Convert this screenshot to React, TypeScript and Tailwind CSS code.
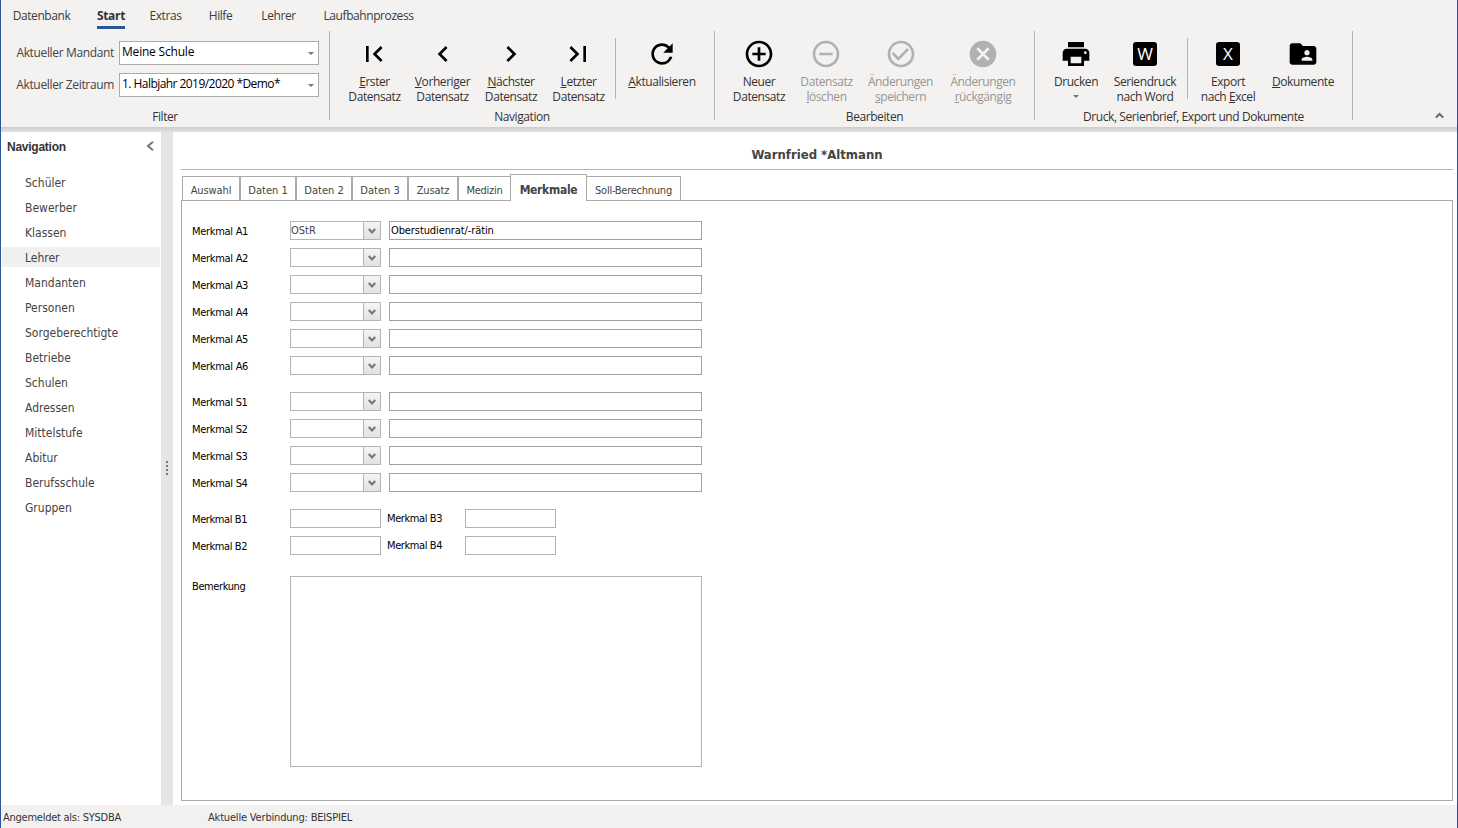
import { useState } from 'react';
import type { ReactNode } from 'react';
import type { IconType } from 'react-icons';
import {
  MdAddCircleOutline,
  MdCancel,
  MdCheckCircleOutline,
  MdChevronLeft,
  MdChevronRight,
  MdFirstPage,
  MdFolderShared,
  MdLastPage,
  MdPrint,
  MdRefresh,
  MdRemoveCircleOutline
} from 'react-icons/md';

const menuTabs = [
  { label: 'Datenbank', className: 'w-[57px] mr-[27px]' },
  { label: 'Start', className: 'w-[28px] mr-[25px]' },
  { label: 'Extras', className: 'w-[31px] mr-[27px]' },
  { label: 'Hilfe', className: 'w-[25px] mr-[29px]' },
  { label: 'Lehrer', className: 'w-[33px] mr-[29px]' },
  { label: 'Laufbahnprozess', className: 'w-[89px]' }
];

const navItems = [
  'Schüler',
  'Bewerber',
  'Klassen',
  'Lehrer',
  'Mandanten',
  'Personen',
  'Sorgeberechtigte',
  'Betriebe',
  'Schulen',
  'Adressen',
  'Mittelstufe',
  'Abitur',
  'Berufsschule',
  'Gruppen'
];

const formTabs = [
  { label: 'Auswahl', className: 'w-[58px] tracking-[-0.1px]' },
  { label: 'Daten 1', className: 'w-[56px]' },
  { label: 'Daten 2', className: 'w-[56px]' },
  { label: 'Daten 3', className: 'w-[56px]' },
  { label: 'Zusatz', className: 'w-[50px] tracking-[-0.1px]' },
  { label: 'Medizin', className: 'w-[52px] tracking-[-0.3px]' },
  { label: 'Merkmale', className: 'w-[77px] tracking-[-0.3px]' },
  { label: 'Soll-Berechnung', className: 'w-[94px] tracking-[-0.25px]' }
];

function Triangle({ className = '' }: { className?: string }) {
  return (
    <svg className={`w-[6px] h-[3px] ${className}`} viewBox="0 0 6 3">
      <path d="M0 0h6L3 3z" fill="#777" />
    </svg>
  );
}

interface FilterSelectProps {
  label: string;
  value: string;
  valueClassName?: string;
}

function FilterSelect({ label, value, valueClassName = '' }: FilterSelectProps) {
  return (
    <div className="flex h-6 items-center">
      <span className="w-[113px] text-right tracking-[-0.35px] text-[#444]">{label}</span>
      <div className="ml-[5px] flex h-6 w-[200px] items-center justify-between border border-[#ababab] bg-white pl-0.5 pr-1 text-black">
        <span className={`-mt-0.5 ${valueClassName}`}>{value}</span>
        <Triangle />
      </div>
    </div>
  );
}

interface RibbonGroupProps {
  title: string;
  className: string;
  children: ReactNode;
}

function RibbonGroup({ title, className, children }: RibbonGroupProps) {
  return (
    <div className={`flex h-[89px] flex-col border-r border-[#b4b4b4] ${className}`}>
      <div className="flex h-[78px] shrink-0">{children}</div>
      <div className="h-4 shrink-0 text-center leading-4 text-[#333]">{title}</div>
    </div>
  );
}

interface RibbonButtonProps {
  className: string;
  icon?: IconType;
  letter?: string;
  lines: ReactNode[];
  disabled?: boolean;
  dropdown?: boolean;
}

function RibbonButton({ className, icon: Icon, letter, lines, disabled, dropdown }: RibbonButtonProps) {
  return (
    <button
      disabled={disabled}
      className={`flex shrink-0 flex-col items-center pt-[7px] ${className} ${
        disabled ? 'text-[#979593]' : 'text-[#333]'
      }`}
    >
      <span className={`flex h-8 items-center justify-center ${disabled ? 'text-[#b1b1b1]' : 'text-black'}`}>
        {Icon && <Icon size={32} />}
        {letter && (
          <span className="flex size-6 items-center justify-center rounded-[3px] bg-black font-['Open_Sans',sans-serif] text-[17px] font-medium leading-6 tracking-normal text-white">
            {letter}
          </span>
        )}
      </span>
      <span className="mt-1 flex flex-col items-center whitespace-nowrap leading-[15px]">
        {lines.map((line, i) => (
          <span key={i}>{line}</span>
        ))}
      </span>
      {dropdown && <Triangle className="mt-1.5" />}
    </button>
  );
}

function Separator() {
  return <div className="ml-[5px] mt-[7px] h-[61px] w-px shrink-0 bg-[#b4b4b4]" />;
}

function Ribbon() {
  return (
    <div className="flex h-[127px] flex-col bg-[#f3f2f1] font-['Open_Sans',sans-serif] text-[12px] tracking-[-0.42px]">
      <div className="flex h-[31px] pl-3 text-[#3b3b3b]">
        {menuTabs.map((tab) => (
          <button
            key={tab.label}
            className={`flex h-[29px] shrink-0 items-center justify-center whitespace-nowrap ${tab.className} ${
              tab.label === 'Start'
                ? 'border-b-[3px] border-[#2b579a] pt-1.5 font-bold tracking-[-0.3px] text-[#333]'
                : 'pt-[3px]'
            }`}
          >
            {tab.label}
          </button>
        ))}
      </div>
      <div className="flex">
        <RibbonGroup title="Filter" className="w-[329px]">
          <div className="flex flex-col gap-2 pt-2.5">
            <FilterSelect label="Aktueller Mandant" value="Meine Schule" valueClassName="tracking-[-0.2px]" />
            <FilterSelect
              label="Aktueller Zeitraum"
              value="1. Halbjahr 2019/2020 *Demo*"
              valueClassName="tracking-[-0.55px]"
            />
          </div>
        </RibbonGroup>
        <RibbonGroup title="Navigation" className="w-[385px]">
          <RibbonButton className="ml-[9px] w-[71px] [&_svg]:mr-px" icon={MdFirstPage} lines={[<><u>E</u>rster</>, 'Datensatz']} />
          <RibbonButton className="w-[65px]" icon={MdChevronLeft} lines={[<><u>V</u>orheriger</>, 'Datensatz']} />
          <RibbonButton className="w-[72px]" icon={MdChevronRight} lines={[<><u>N</u>ächster</>, 'Datensatz']} />
          <RibbonButton className="w-[63px] [&_svg]:mr-px" icon={MdLastPage} lines={[<><u>L</u>etzter</>, 'Datensatz']} />
          <Separator />
          <RibbonButton className="w-[92px]" icon={MdRefresh} lines={[<><u>A</u>ktualisieren</>]} />
        </RibbonGroup>
        <RibbonGroup title="Bearbeiten" className="w-[320px]">
          <RibbonButton className="ml-[9px] w-[70px]" icon={MdAddCircleOutline} lines={['Neuer', 'Datensatz']} />
          <RibbonButton className="w-[65px] [&_svg]:mr-px" icon={MdRemoveCircleOutline} lines={['Datensatz', <><u>l</u>öschen</>]} disabled />
          <RibbonButton className="w-[83px]" icon={MdCheckCircleOutline} lines={['Änderungen', <><u>s</u>peichern</>]} disabled />
          <RibbonButton className="w-[82px]" icon={MdCancel} lines={['Änderungen', <><u>r</u>ückgängig</>]} disabled />
        </RibbonGroup>
        <RibbonGroup title="Druck, Serienbrief, Export und Dokumente" className="w-[318px]">
          <RibbonButton className="ml-[9px] w-[64px]" icon={MdPrint} lines={['Drucken']} dropdown />
          <RibbonButton className="w-[74px]" letter="W" lines={['Seriendruck', 'nach Word']} />
          <Separator />
          <RibbonButton className="w-[80px]" letter="X" lines={['Export', <>nach <u>E</u>xcel</>]} />
          <RibbonButton className="w-[70px]" icon={MdFolderShared} lines={[<><u>D</u>okumente</>]} />
        </RibbonGroup>
        <button className="ml-auto mr-[13px] mt-[81px] h-[7px]" aria-label="Menüband reduzieren">
          <svg className="h-[7px] w-[9px]" viewBox="0 0 9 7" fill="none" stroke="#666" strokeWidth="2">
            <path d="M.8 5.6 4.5 2l3.7 3.6" />
          </svg>
        </button>
      </div>
    </div>
  );
}

interface SidebarProps {
  active: string;
  onSelect: (item: string) => void;
}

function Sidebar({ active, onSelect }: SidebarProps) {
  return (
    <div className="w-40 shrink-0 bg-white">
      <div className="flex h-10 items-start justify-between pl-1.5 pr-[7px] pt-[7px]">
        <span className="font-['Liberation_Sans',Arial,sans-serif] text-xs font-bold leading-4 tracking-[-0.25px] text-[#333]">
          Navigation
        </span>
        <svg className="mt-0.5 h-[10px] w-[8px]" viewBox="0 0 8 10" fill="none" stroke="#777" strokeWidth="2">
          <path d="M7 .8 2 5l5 4.2" />
        </svg>
      </div>
      <div className="flex flex-col gap-[5px] px-px">
        {navItems.map((item) => (
          <button
            key={item}
            onClick={() => onSelect(item)}
            className={`h-5 pl-[23px] pt-0.5 text-left text-xs leading-[18px] text-[#444] ${item === active ? 'bg-[#f0f0f0]' : ''}`}
          >
            {item}
          </button>
        ))}
      </div>
    </div>
  );
}

interface FeatureRowProps {
  label: string;
  code?: string;
  text?: string;
}

function FeatureRow({ label, code, text }: FeatureRowProps) {
  return (
    <div className="flex h-[19px] items-center">
      <span className="w-[98px] pt-[3px] tracking-[-0.3px] text-black">{label}</span>
      <div className="flex h-[19px] w-[91px] border border-[#b4b4b4]">
        <span className="w-[72px] leading-[17px] text-[#444]">{code}</span>
        <span className="flex flex-1 items-center justify-center border-l border-[#b4b4b4] bg-gradient-to-b from-[#f4f4f4] to-[#e2e2e2]">
          <svg className="h-[6px] w-[8px]" viewBox="0 0 8 6" fill="none" stroke="#777" strokeWidth="2.2">
            <path d="M.8 1 4 4.4 7.2 1" />
          </svg>
        </span>
      </div>
      <div className="ml-2 h-[19px] w-[313px] border border-[#a0a0a0] pl-px leading-[17px] tracking-[-0.1px] text-black">
        {text}
      </div>
    </div>
  );
}

function PairRow({ left, right }: { left: string; right: string }) {
  return (
    <div className="flex h-[19px] items-center tracking-[-0.4px] text-black">
      <span className="w-[98px] pt-[3px]">{left}</span>
      <div className="h-[19px] w-[91px] border border-[#b4b4b4]" />
      <span className="ml-1.5 w-[78px] pt-px">{right}</span>
      <div className="h-[19px] w-[91px] border border-[#b4b4b4]" />
    </div>
  );
}

export default function App() {
  const [activeItem, setActiveItem] = useState('Lehrer');
  const [activeTab, setActiveTab] = useState('Merkmale');

  return (
    <div className="flex h-[828px] w-[1458px] flex-col overflow-hidden border-x border-[#2b579a] bg-[#e5e5e5] font-['DejaVu_Sans_Condensed','DejaVu_Sans',sans-serif] text-[11px]">
      <Ribbon />
      <div className="h-[5px] shrink-0 bg-gradient-to-b from-[#cdcdcd] to-[#e2e2e2]" />

      <div className="flex h-[673px]">
        <Sidebar active={activeItem} onSelect={setActiveItem} />

        {/* Splitter */}
        <div className="flex w-3 shrink-0 flex-col items-center gap-0.5 pt-[329px]">
          {[0, 1, 2, 3].map((dot) => (
            <span key={dot} className="size-0.5 bg-[#777]" />
          ))}
        </div>

        <div className="flex flex-1 flex-col bg-white pb-1 pl-2 pr-1">
          <h1 className="h-[38px] border-b border-[#b4b4b4] pt-[15px] text-center text-[13px] font-bold leading-4 text-[#444]">
            Warnfried *Altmann
          </h1>
          <div className="flex h-[30px] items-end pl-px">
            {formTabs.map((tab, i) => {
              const active = tab.label === activeTab;
              const followsActive = i > 0 && formTabs[i - 1].label === activeTab;
              const beforeActive = formTabs[i + 1]?.label === activeTab;
              return (
                <button
                  key={tab.label}
                  onClick={() => setActiveTab(tab.label)}
                  className={`flex shrink-0 items-center justify-center whitespace-nowrap border-t border-[#ababab] bg-white text-[#444] ${tab.className} ${
                    active ? 'z-10 -mb-px h-[27px] border-x pt-[3px] text-[12px] font-bold text-[#333]' : 'h-6 pt-[5px]'
                  } ${!active && !followsActive ? 'border-l' : ''} ${!active && !beforeActive ? 'border-r' : ''}`}
                >
                  {tab.label}
                </button>
              );
            })}
          </div>
          <div className="flex-1 border border-[#ababab] pl-2.5 pt-5">
            <div className="flex flex-col gap-2">
              <FeatureRow label="Merkmal A1" code="OStR" text="Oberstudienrat/-rätin" />
              <FeatureRow label="Merkmal A2" />
              <FeatureRow label="Merkmal A3" />
              <FeatureRow label="Merkmal A4" />
              <FeatureRow label="Merkmal A5" />
              <FeatureRow label="Merkmal A6" />
            </div>
            <div className="mt-[17px] flex flex-col gap-2">
              <FeatureRow label="Merkmal S1" />
              <FeatureRow label="Merkmal S2" />
              <FeatureRow label="Merkmal S3" />
              <FeatureRow label="Merkmal S4" />
            </div>
            <div className="mt-[17px] flex flex-col gap-2">
              <PairRow left="Merkmal B1" right="Merkmal B3" />
              <PairRow left="Merkmal B2" right="Merkmal B4" />
            </div>
            <div className="mt-[21px] flex">
              <span className="w-[98px] pt-[3px] leading-4 tracking-[-0.4px] text-black">Bemerkung</span>
              <div className="h-[191px] w-[412px] border border-[#b4b4b4]" />
            </div>
          </div>
        </div>
      </div>

      {/* Status bar */}
      <div className="flex h-[23px] items-center bg-[#f3f1f0] pl-0.5 pt-[3px] tracking-[-0.25px] text-[#333]">
        <span className="w-[205px]">Angemeldet als: SYSDBA</span>
        <span className="tracking-[-0.18px]">Aktuelle Verbindung: BEISPIEL</span>
      </div>
    </div>
  );
}
